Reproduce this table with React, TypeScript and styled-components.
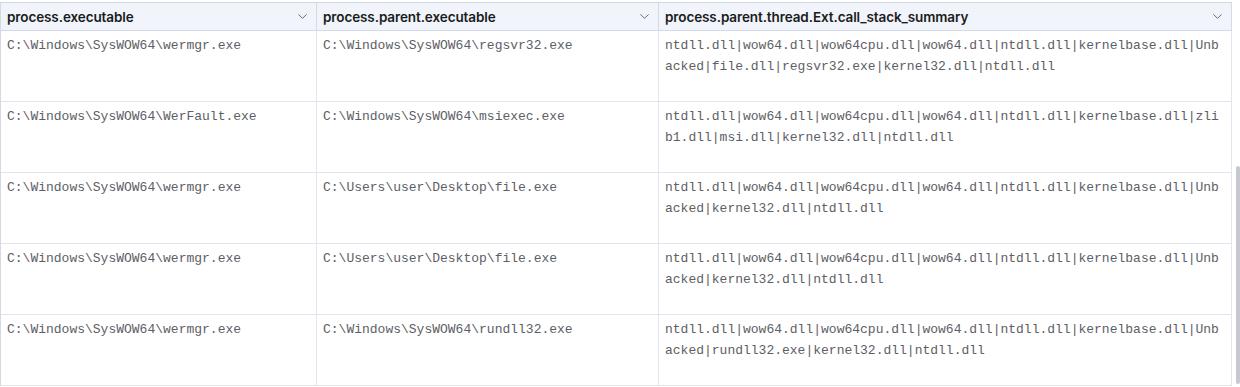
import React from "react";
import styled, { createGlobalStyle } from "styled-components";
import { ChevronDown } from "lucide-react";

const GlobalStyle = createGlobalStyle`
  html, body {
    margin: 0;
    padding: 0;
    background: #ffffff;
  }
  body {
    font-family: Inter, "Noto Sans", sans-serif;
    overflow: hidden;
  }
`;

const Page = styled.div`
  position: relative;
  width: 1240px;
  height: 387px;
  padding-top: 2px;
  box-sizing: border-box;
`;

const Grid = styled.div`
  display: grid;
  grid-template-columns: 316px 342px 573px;
  width: 1232px;
  border-left: 1px solid #d3dae6;
  border-top: 1px solid #d3dae6;
  box-sizing: border-box;
`;

const HeaderCell = styled.div`
  display: flex;
  align-items: center;
  justify-content: space-between;
  height: 28px;
  box-sizing: border-box;
  padding: 0 6px 0 6px;
  background: #f1f4fa;
  border-right: 1px solid #d3dae6;
  border-bottom: 1px solid #d3dae6;
  font-size: 13.5px;
  font-weight: 600;
  color: #1a1c21;
  letter-spacing: -0.1px;

  svg {
    color: #5a606b;
    flex-shrink: 0;
  }
`;

const Cell = styled.div`
  height: 71px;
  padding: 4px 6px 0 6px;
  box-sizing: border-box;
  border-right: 1px solid #e0e5ee;
  border-bottom: 1px solid #e0e5ee;
  font-family: "Liberation Mono", "DejaVu Sans Mono", monospace;
  font-size: 13px;
  line-height: 21px;
  color: #5c6066;
  word-break: break-all;
  white-space: pre-wrap;
`;

const ScrollThumb = styled.div`
  position: absolute;
  right: 0;
  top: 166px;
  width: 4px;
  height: 218px;
  border-radius: 2px;
  background: #c6c9cf;
`;

const columns = [
  "process.executable",
  "process.parent.executable",
  "process.parent.thread.Ext.call_stack_summary",
];

const rows: string[][] = [
  [
    "C:\\Windows\\SysWOW64\\wermgr.exe",
    "C:\\Windows\\SysWOW64\\regsvr32.exe",
    "ntdll.dll|wow64.dll|wow64cpu.dll|wow64.dll|ntdll.dll|kernelbase.dll|Unbacked|file.dll|regsvr32.exe|kernel32.dll|ntdll.dll",
  ],
  [
    "C:\\Windows\\SysWOW64\\WerFault.exe",
    "C:\\Windows\\SysWOW64\\msiexec.exe",
    "ntdll.dll|wow64.dll|wow64cpu.dll|wow64.dll|ntdll.dll|kernelbase.dll|zlib1.dll|msi.dll|kernel32.dll|ntdll.dll",
  ],
  [
    "C:\\Windows\\SysWOW64\\wermgr.exe",
    "C:\\Users\\user\\Desktop\\file.exe",
    "ntdll.dll|wow64.dll|wow64cpu.dll|wow64.dll|ntdll.dll|kernelbase.dll|Unbacked|kernel32.dll|ntdll.dll",
  ],
  [
    "C:\\Windows\\SysWOW64\\wermgr.exe",
    "C:\\Users\\user\\Desktop\\file.exe",
    "ntdll.dll|wow64.dll|wow64cpu.dll|wow64.dll|ntdll.dll|kernelbase.dll|Unbacked|kernel32.dll|ntdll.dll",
  ],
  [
    "C:\\Windows\\SysWOW64\\wermgr.exe",
    "C:\\Windows\\SysWOW64\\rundll32.exe",
    "ntdll.dll|wow64.dll|wow64cpu.dll|wow64.dll|ntdll.dll|kernelbase.dll|Unbacked|rundll32.exe|kernel32.dll|ntdll.dll",
  ],
];

const App: React.FC = () => {
  return (
    <>
      <GlobalStyle />
      <Page>
        <Grid>
          {columns.map((col) => (
            <HeaderCell key={col}>
              <span>{col}</span>
              <ChevronDown size={15} strokeWidth={1.5} />
            </HeaderCell>
          ))}
          {rows.map((row, i) =>
            row.map((value, j) => <Cell key={`${i}-${j}`}>{value}</Cell>)
          )}
        </Grid>
        <ScrollThumb />
      </Page>
    </>
  );
};

export default App;
